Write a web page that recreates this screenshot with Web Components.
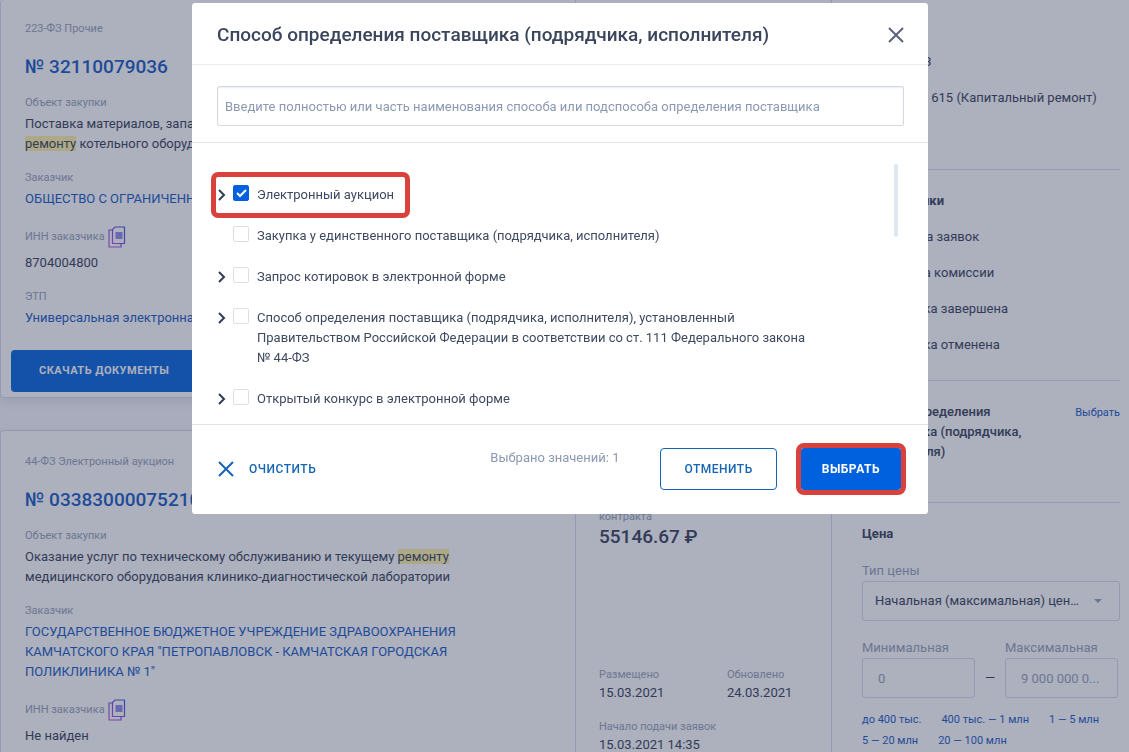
<!DOCTYPE html>
<html lang="ru">
<head>
<meta charset="utf-8">
<meta name="viewport" content="width=device-width, initial-scale=1">
<title>Поиск закупок</title>
<style>
html, body { height: 100%; }
body {
  margin: 0;
  overflow: hidden;
  background: #f8f9fe;
  font: 13px/20px Roboto, "Liberation Sans", sans-serif;
  color: #323c55;
  --ink: #323c55;
  --muted: #93a0b8;
  --link: #1058c4;
  --brand: #0061de;
  --line: #d6dbe8;
  --mark: #d8413c;
}
a { color: var(--link); text-decoration: none; }
mark { background: #fff3a6; color: inherit; }
</style>
</head>
<body>
<app-page>
  <purchase-card slot="feed" cut>
    <span slot="kind">223-ФЗ Прочие</span>
    <a slot="number" href="#p1">№ 32110079036</a>
    <data-field label="Объект закупки">Поставка материалов, запасных частей по <br><mark>ремонту</mark> котельного оборудования</data-field>
    <data-field label="Заказчик"><a href="#c1">ОБЩЕСТВО С ОГРАНИЧЕННОЙ</a></data-field>
    <data-field label="ИНН заказчика" copy>8704004800</data-field>
    <data-field label="ЭТП"><a href="#e1">Универсальная электронная площадка</a></data-field>
    <action-button slot="footer" kind="bold" wide>СКАЧАТЬ ДОКУМЕНТЫ</action-button>
  </purchase-card>
  <purchase-card slot="feed">
    <span slot="kind">44-ФЗ Электронный аукцион</span>
    <a slot="number" href="#p2">№ 0338300007521000</a>
    <data-field label="Объект закупки">Оказание услуг по техническому обслуживанию и текущему <mark>ремонту</mark> медицинского оборудования клинико-диагностической лаборатории</data-field>
    <data-field label="Заказчик"><a href="#c2">ГОСУДАРСТВЕННОЕ БЮДЖЕТНОЕ УЧРЕЖДЕНИЕ ЗДРАВООХРАНЕНИЯ КАМЧАТСКОГО КРАЯ "ПЕТРОПАВЛОВСК - КАМЧАТСКАЯ ГОРОДСКАЯ ПОЛИКЛИНИКА № 1"</a></data-field>
    <data-field label="ИНН заказчика" copy>Не найден</data-field>
    <price-summary slot="summary"></price-summary>
  </purchase-card>
  <filter-panel slot="filters"></filter-panel>
</app-page>
<method-dialog>
  <option-row checked expandable marked>Электронный аукцион</option-row>
  <option-row>Закупка у единственного поставщика (подрядчика, исполнителя)</option-row>
  <option-row expandable>Запрос котировок в электронной форме</option-row>
  <option-row expandable>Способ определения поставщика (подрядчика, исполнителя), установленный Правительством Российской Федерации в соответствии со ст. 111 Федерального закона №&nbsp;44-ФЗ</option-row>
  <option-row expandable>Открытый конкурс в электронной форме</option-row>
</method-dialog>

<script>
function define(name, html, setup) {
  const template = document.createElement('template');
  template.innerHTML = html;
  customElements.define(name, class extends HTMLElement {
    constructor() {
      super();
      this.attachShadow({ mode: 'open' }).append(template.content.cloneNode(true));
    }
    connectedCallback() { if (setup) setup(this.shadowRoot, this); }
  });
}

define('app-page', `
<style>
:host { display: grid; grid-template-columns: minmax(0, 1fr) 289px; height: 100vh; overflow: hidden; padding-right: 9px; box-sizing: border-box; background: #fff; }
main { display: flex; flex-direction: column; gap: 32px; background: #f8f9fe; }
</style>
<main><slot name="feed"></slot></main>
<slot name="filters"></slot>`);

define('purchase-card', `
<style>
:host { display: grid; grid-template-columns: minmax(0, 1fr) 256px; background: #fff; border: solid var(--line); border-width: 1px 0 1px 1px; border-radius: 4px; box-shadow: 0 4px 12px rgba(50, 60, 100, .12); box-sizing: border-box; }
.body { padding: 23px 72px 22px 24px; }
:host([cut]) { border-top: 0; }
:host([cut]) .body { padding-top: 21px; }
.kind { font-size: 11px; line-height: 16px; color: var(--muted); }
.number { margin: 18px 0 16px; font-size: 19px; line-height: 24px; font-weight: 500; white-space: nowrap; overflow: hidden; }
.fields { display: flex; flex-direction: column; gap: 16px; }
.side { border-left: 1px solid var(--line); }
.foot { grid-column: 1 / -1; padding: 0 10px 5px; }
</style>
<div class="body">
  <div class="kind"><slot name="kind"></slot></div>
  <div class="number"><slot name="number"></slot></div>
  <div class="fields"><slot></slot></div>
</div>
<div class="side"><slot name="summary"></slot></div>
<div class="foot"><slot name="footer"></slot></div>`, (root, host) => {
  if (!host.querySelector('[slot=footer]')) root.querySelector('.foot').remove();
});

define('data-field', `
<style>
:host { display: block; }
.label { display: flex; align-items: center; gap: 3px; margin-bottom: 3px; font-size: 11px; line-height: 16px; color: var(--muted); }
:host([copy]) .label { height: 24px; margin-bottom: 4px; }
button { display: none; padding: 0; border: 0; background: none; }
:host([copy]) button { display: flex; }
</style>
<div class="label"><span></span><button aria-label="Скопировать"><svg width="18" height="22" viewBox="0 0 18 22" fill="none">
<defs><linearGradient id="g" x1="1" y1="0" x2="0" y2="1"><stop stop-color="#3a4fe0"/><stop offset=".5" stop-color="#7a4fe0"/><stop offset="1" stop-color="#c84fe0"/></linearGradient></defs>
<path d="M7 1H16.500V17.500H4.500V3.500z M4.500 4H1V21H13V17.500" stroke="url(#g)" stroke-width="1.200"/>
<path d="M7.500 6h7v7h-7z" fill="#8d8ae8"/><path d="M2.500 8v8" stroke="url(#g)"/></svg></button></div>
<slot></slot>`, (root, host) => {
  root.querySelector('span').textContent = host.getAttribute('label');
});

define('action-button', `
<style>
:host { display: block; }
button { display: flex; align-items: center; justify-content: center; gap: 15px; height: 42px; padding: 0 20px; border: 1px solid transparent; border-radius: 4px; background: none; color: #1565b5; font: 500 12px/20px Roboto, "Liberation Sans", sans-serif; white-space: nowrap; letter-spacing: 0.5px; }
:host([kind=outline]) button { padding: 0 23px; border-color: #1565b5; }
:host([kind=bold]) button { background: var(--brand); color: #fff; font-weight: 700; }
:host([kind=text]) button { padding: 0; border: 0; }
:host([wide]) button { width: 100%; justify-content: flex-start; padding-left: 27px; font-size: 11px; }
:host([marked]) button { outline: 5px solid var(--mark); border-radius: 3px; }
</style>
<button><slot></slot></button>`);

define('price-summary', `
<style>
:host { display: block; padding: 62px 24px 0 23px; }
.label { font-size: 11px; line-height: 16px; color: var(--muted); }
.title { width: 100px; }
.price { font-size: 19px; line-height: 24px; font-weight: 500; margin-bottom: 118px; }
.dates { display: grid; grid-template-columns: 128px 1fr; row-gap: 16px; }
.all { grid-column: 1 / -1; }
</style>
<div class="label title">Начальная цена контракта</div>
<div class="price">55146.67 ₽</div>
<div class="dates">
  <div><div class="label">Размещено</div>15.03.2021</div>
  <div><div class="label">Обновлено</div>24.03.2021</div>
  <div class="all"><div class="label">Начало подачи заявок</div>15.03.2021 14:35</div>
</div>`);

define('filter-panel', `
<style>
:host { display: block; border-left: 1px solid var(--line); padding: 0 0 0 30px; background: #fff; }
section { border-bottom: 1px solid var(--line); padding: 21px 0 25px; display: flex; flex-direction: column; gap: 16px; }
section.law { padding: 16px 0 61px; }
section.method { flex-direction: row; justify-content: space-between; padding-bottom: 40px; gap: 8px; }
section.price { border: 0; gap: 0; }
h3 { margin: 0; font-size: 13px; line-height: 20px; font-weight: 700; }
.method h3 { width: 170px; font-weight: 500; }
.check { display: flex; align-items: center; gap: 10px; }
.check input { appearance: none; width: 16px; height: 16px; margin: 0; border: 1px solid var(--line); border-radius: 2px; }
a { color: var(--link); text-decoration: none; font-size: 11px; line-height: 20px; }
.method a { line-height: 22px; }
.caption { color: var(--muted); }
.price > .caption { margin-top: 17px; }
select, .range input { box-sizing: border-box; width: 100%; height: 40px; border: 1px solid var(--line); border-radius: 3px; background: #fff; color: var(--ink); font: inherit; text-overflow: ellipsis; }
.range input { padding: 0 15px; }
.range input::placeholder { color: var(--muted); opacity: 1; }
.select { display: grid; align-items: center; }
.select > * { grid-area: 1 / 1; }
select { appearance: none; padding: 0 40px 0 12px; overflow: hidden; white-space: nowrap; }
.select svg { justify-self: end; margin-right: 18px; pointer-events: none; }
.range { display: grid; grid-template-columns: 1fr 30px 1fr; padding-right: 2px; margin-top: 17px; }
.range span { align-self: end; line-height: 40px; text-align: center; }
.presets { display: flex; flex-wrap: wrap; gap: 1px 20px; margin-top: 12px; }
</style>
<section class="law">
  <label class="check"><input type="checkbox">44-ФЗ</label>
  <label class="check"><input type="checkbox">223-ФЗ</label>
  <label class="check"><input type="checkbox">ПП РФ 615 (Капитальный ремонт)</label>
</section>
<section>
  <h3>Этап закупки</h3>
  <label class="check"><input type="checkbox">Подача заявок</label>
  <label class="check"><input type="checkbox">Работа комиссии</label>
  <label class="check"><input type="checkbox">Закупка завершена</label>
  <label class="check"><input type="checkbox">Закупка отменена</label>
</section>
<section class="method">
  <h3>Способ определения поставщика (подрядчика, исполнителя)</h3>
  <a href="#method">Выбрать</a>
</section>
<section class="price">
  <h3>Цена</h3>
  <label class="caption" for="type">Тип цены</label>
  <div class="select">
    <select id="type"><option>Начальная (максимальная) цен...</option></select>
    <svg width="8" height="4" viewBox="0 0 8 4"><path d="M0 0h8L4 4z" fill="#93a0b8"/></svg>
  </div>
  <div class="range">
    <label class="caption">Минимальная<input placeholder="0"></label>
    <span>—</span>
    <label class="caption">Максимальная<input placeholder="9 000 000 0..."></label>
  </div>
  <div class="presets">
    <a href="#r1">до 400 тыс.</a><a href="#r2">400 тыс. — 1 млн</a><a href="#r3">1 — 5 млн</a><a href="#r4">5 — 20 млн</a><a href="#r5">20 — 100 млн</a>
  </div>
</section>`);

define('option-row', `
<style>
:host { display: grid; grid-template-columns: 16px minmax(0, 1fr); position: relative; color: #3f4a60; }
button { display: none; align-self: start; height: 20px; padding: 0; border: 0; background: none; align-items: center; }
:host([expandable]) button { display: flex; }
label { grid-column: 2; display: grid; grid-template-columns: 16px minmax(0, 560px); column-gap: 8px; }
input { appearance: none; grid-area: 1 / 1; width: 16px; height: 16px; margin: 0; border: 1px solid #dcdfe6; border-radius: 2px; background: #fff; }
input:checked { background: var(--brand); border-color: var(--brand); }
label svg { grid-area: 1 / 1; visibility: hidden; pointer-events: none; z-index: 1; }
input:checked + svg { visibility: visible; }
.frame { display: none; }
:host([marked]) .frame { display: block; position: absolute; left: -6px; top: -13px; width: 189px; height: 36px; border: 5px solid var(--mark); border-radius: 7px; pointer-events: none; }
</style>
<button aria-label="Развернуть"><svg width="9" height="12" viewBox="0 0 9 12" fill="none"><path d="M2 1l5 5-5 5" stroke="#323c55" stroke-width="2"/></svg></button>
<label><input type="checkbox"><svg width="16" height="16" viewBox="0 0 16 16" fill="none"><path d="M4 8l3 3 6-6" stroke="#fff" stroke-width="2"/></svg><span><slot></slot></span></label>
<div class="frame"></div>`, (root, host) => {
  root.querySelector('input').checked = host.hasAttribute('checked');
});

define('method-dialog', `
<style>
:host { position: fixed; inset: 0; display: flex; justify-content: center; align-items: flex-start; padding: 3px 9px 0 0; background: rgba(50, 57, 90, .4); }
.dialog { width: 100%; max-width: 736px; background: #fff; border-radius: 3px; }
header { display: flex; align-items: center; justify-content: space-between; padding: 2px 24px 0 25px; height: 59px; border-bottom: 1px solid #e9ebf0; }
h2 { margin: 0; font-size: 19px; line-height: 24px; font-weight: 500; color: #3b465c; }
header button { display: flex; padding: 0; border: 0; background: none; }
.search { padding: 21px 24px 16px 25px; border-bottom: 1px solid #e5e8ee; }
.search input { display: block; box-sizing: border-box; width: 100%; height: 40px; padding: 0 7px; border: 1px solid #d5d9e2; border-radius: 2px; background: #fff; font: inherit; color: inherit; box-shadow: inset 0 1px 2px rgba(50, 60, 85, .1); }
input::placeholder { color: #8c99b2; opacity: 1; }
.list { position: relative; display: flex; flex-direction: column; gap: 21px; padding: 42px 24px 15px 25px; }
.thumb { position: absolute; right: 30px; top: 21px; width: 4px; height: 73px; border-radius: 2px; background: #dfe7f0; }
footer { display: flex; align-items: center; height: 87px; padding: 0 27px 2px 26px; border-top: 1px solid #dfe2e8; }
.count { flex: 1; align-self: flex-start; margin: 23px 41px 0; text-align: right; color: #8c99b2; }
.buttons { display: flex; gap: 24px; }
</style>
<div class="dialog" role="dialog" aria-modal="true" aria-labelledby="title">
  <header>
    <h2 id="title">Способ определения поставщика (подрядчика, исполнителя)</h2>
    <button aria-label="Закрыть"><svg width="16" height="16" viewBox="0 0 16 16"><path d="M1 1l14 14M15 1L1 15" stroke="#5a627c" stroke-width="2"/></svg></button>
  </header>
  <div class="search"><input aria-label="Поиск способа" placeholder="Введите полностью или часть наименования способа или подспособа определения поставщика"></div>
  <div class="list"><slot></slot><div class="thumb"></div></div>
  <footer>
    <action-button kind="text"><svg width="16" height="16" viewBox="0 0 16 16"><path d="M1 1l14 14M15 1L1 15" stroke="#1565b5" stroke-width="2"/></svg>ОЧИСТИТЬ</action-button>
    <div class="count">Выбрано значений: 1</div>
    <div class="buttons">
      <action-button kind="outline">ОТМЕНИТЬ</action-button>
      <action-button kind="bold" marked>ВЫБРАТЬ</action-button>
    </div>
  </footer>
</div>`);
</script>
</body>
</html>
